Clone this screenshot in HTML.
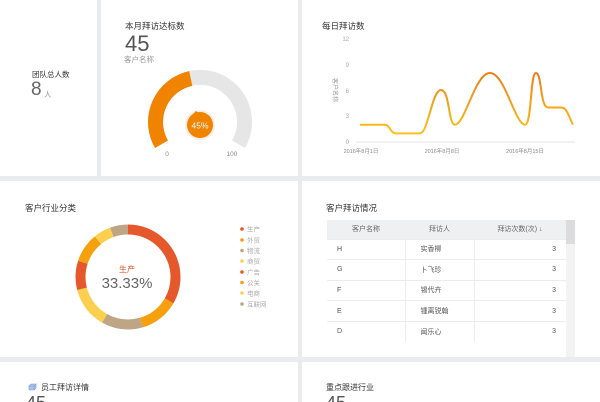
<!DOCTYPE html><html><head><meta charset="utf-8"><style>
*{margin:0;padding:0;box-sizing:border-box}
html,body{width:600px;height:402px;overflow:hidden}
body{background:#e9ebee;position:relative;font-family:"Liberation Sans","Noto Sans CJK SC",sans-serif;color:#333}
.p{position:absolute;background:#fff}
.t{position:absolute;font-size:8.5px;color:#333}
.s{position:absolute;color:#999}
table{position:absolute;left:327px;top:220px;width:239px;border-collapse:collapse;font-size:7px;color:#555}
td,th{height:20.6px;border-bottom:1px solid #ececec;font-weight:normal}
th{background:#eef0f2;height:19px;color:#666}
</style></head><body>
<div class="p" style="left:0;top:0;width:97px;height:176px"></div>
<div class="p" style="left:101px;top:0;width:197px;height:176px"></div>
<div class="p" style="left:302px;top:0;width:298px;height:176px"></div>
<div class="p" style="left:0;top:181px;width:298px;height:176px"></div>
<div class="p" style="left:302px;top:181px;width:298px;height:176px"></div>
<div class="p" style="left:0;top:362px;width:298px;height:60px"></div>
<div class="p" style="left:302px;top:362px;width:298px;height:60px"></div>

<div class="t" style="left:32px;top:69px;font-size:7.5px">团队总人数</div>
<div class="s" style="left:31px;top:79px;font-size:19px;color:#666">8</div>
<div class="s" style="left:44px;top:89px;font-size:7.5px">人</div>

<div class="t" style="left:125px;top:20px">本月拜访达标数</div>
<div class="s" style="left:125px;top:31px;font-size:22px;color:#555">45</div>
<div class="s" style="left:124px;top:54px;font-size:7.5px">客户名称</div>
<svg style="position:absolute;left:0;top:0" width="600" height="402">
<path d="M161.5,144.25 A44.5,44.5 0 1 1 238.5,144.25" fill="none" stroke="#e6e6e6" stroke-width="15"/>
<path d="M161.5,144.25 A44.5,44.5 0 0 1 190.75,78.5" fill="none" stroke="#f08300" stroke-width="15"/>
<circle cx="200" cy="125" r="15" fill="#f6eee4"/>
<circle cx="200" cy="125" r="13" fill="#f08300"/>
<path d="M191,116 L196,111 L199,113Z" fill="#f08300"/>
<text x="200" y="128.5" font-size="8.5" fill="#fff" text-anchor="middle" font-family="Liberation Sans">45%</text>
<text x="167" y="156" font-size="6.5" fill="#888" text-anchor="middle">0</text>
<text x="232" y="156" font-size="6.5" fill="#888" text-anchor="middle">100</text>

<g font-size="6" fill="#aaa" text-anchor="end" font-family="Liberation Sans">
<text x="349" y="41">12</text><text x="349" y="67">9</text><text x="349" y="93">6</text><text x="349" y="118">3</text><text x="349" y="144">0</text></g>
<line x1="356" y1="142" x2="575" y2="142" stroke="#ddd" stroke-width="0.7"/>
<text x="0" y="0" font-size="6" fill="#999" transform="translate(333,78) rotate(90)" font-family="Liberation Sans,Noto Sans CJK SC">客户名称</text>
<g font-size="5.5" fill="#888" text-anchor="middle" font-family="Liberation Sans,Noto Sans CJK SC">
<text x="361" y="153">2016年8月1日</text><text x="442" y="153">2016年8月8日</text><text x="525" y="153">2016年8月15日</text></g>
<defs><linearGradient id="g" x1="0" y1="73" x2="0" y2="134" gradientUnits="userSpaceOnUse"><stop offset="0" stop-color="#ec7e1a"/><stop offset="1" stop-color="#fbc21a"/></linearGradient></defs>
<path d="M360,124.7 L385,124.7 C390,124.7 390,133.4 396,133.4 L420,133.4 C428,133.4 432,90 441,90 C450,90 448,124.7 455,124.7 C465,124.7 475,73 490,73 C505,73 515,124.7 525,124.7 C532,124.7 530,73 536,73 C542,73 540,107.5 548,107.5 L561,107.5 C567,107.5 568,115 573,124.7" fill="none" stroke="url(#g)" stroke-width="2"/>

<g transform="rotate(-90 128 277)" fill="none" stroke-width="10">
<circle cx="128" cy="277" r="47.5" stroke="#e5582b" stroke-dasharray="99.5 300"/>
<circle cx="128" cy="277" r="47.5" stroke="#f5a00c" stroke-dasharray="0 99.5 36 300"/>
<circle cx="128" cy="277" r="47.5" stroke="#bda585" stroke-dasharray="0 135.5 38 300"/>
<circle cx="128" cy="277" r="47.5" stroke="#fcd04e" stroke-dasharray="0 173.5 38 300"/>
<circle cx="128" cy="277" r="47.5" stroke="#e5582b" stroke-dasharray="0 211.5 27 300"/>
<circle cx="128" cy="277" r="47.5" stroke="#f5a00c" stroke-dasharray="0 238.5 27 300"/>
<circle cx="128" cy="277" r="47.5" stroke="#fcd04e" stroke-dasharray="0 265.5 16 300"/>
<circle cx="128" cy="277" r="47.5" stroke="#bda585" stroke-dasharray="0 281.5 17 300"/>
</g>
<circle cx="128" cy="277" r="42" fill="#fff"/>
<text x="127" y="272" font-size="8" fill="#e5582b" text-anchor="middle" font-family="Liberation Sans,Noto Sans CJK SC">生产</text>
<text x="127" y="288" font-size="15" fill="#666" text-anchor="middle" font-family="Liberation Sans">33.33%</text>
<g font-size="6.5" fill="#aaa" font-family="Liberation Sans,Noto Sans CJK SC">
<circle cx="242" cy="229" r="1.8" fill="#e5582b"/><text x="247" y="231.5">生产</text>
<circle cx="242" cy="240" r="1.8" fill="#f5a00c"/><text x="247" y="242.5">外贸</text>
<circle cx="242" cy="250.5" r="1.8" fill="#bda585"/><text x="247" y="253">物流</text>
<circle cx="242" cy="261" r="1.8" fill="#fcd04e"/><text x="247" y="263.5">商贸</text>
<circle cx="242" cy="272" r="1.8" fill="#e5582b"/><text x="247" y="274.5">广告</text>
<circle cx="242" cy="282.5" r="1.8" fill="#f5a00c"/><text x="247" y="285">公关</text>
<circle cx="242" cy="293" r="1.8" fill="#fcd04e"/><text x="247" y="295.5">电商</text>
<circle cx="242" cy="304" r="1.8" fill="#bda585"/><text x="247" y="306.5">互联网</text>
</g>
<rect x="566" y="220" width="9" height="137" fill="#f3f3f3"/>
<rect x="566" y="220" width="9" height="24" fill="#dcdcdc"/>
<path d="M29,386 h5 l2,-2 h-5z M29,386 v4 h5 v-4 M34,386 l2,-2 v4 l-2,2" fill="#a9c4ea" stroke="#7aa0d8" stroke-width="0.6"/>
</svg>
<div class="t" style="left:322px;top:20px">每日拜访数</div>
<div class="t" style="left:25px;top:202px">客户行业分类</div>
<div class="t" style="left:326px;top:202px">客户拜访情况</div>
<table>
<tr><th style="width:78px">客户名称</th><th style="width:69px">拜访人</th><th>拜访次数(次) ↓</th></tr>
<tr><td style="padding-left:10px">H</td><td style="border-left:1px solid #ececec;padding-left:15px">实香柳</td><td style="border-left:1px solid #ececec;text-align:right;padding-right:10px">3</td></tr>
<tr><td style="padding-left:10px">G</td><td style="border-left:1px solid #ececec;padding-left:15px">卜飞珍</td><td style="border-left:1px solid #ececec;text-align:right;padding-right:10px">3</td></tr>
<tr><td style="padding-left:10px">F</td><td style="border-left:1px solid #ececec;padding-left:15px">锡代卉</td><td style="border-left:1px solid #ececec;text-align:right;padding-right:10px">3</td></tr>
<tr><td style="padding-left:10px">E</td><td style="border-left:1px solid #ececec;padding-left:15px">锺离锐翰</td><td style="border-left:1px solid #ececec;text-align:right;padding-right:10px">3</td></tr>
<tr><td style="padding-left:10px;border:none">D</td><td style="border-left:1px solid #ececec;padding-left:15px;border-bottom:none">闻乐心</td><td style="border-left:1px solid #ececec;text-align:right;padding-right:10px;border-bottom:none">3</td></tr>
</table>
<div class="t" style="left:41px;top:382px;font-size:8px">员工拜访详情</div>
<div class="s" style="left:26px;top:393px;font-size:18px;color:#555">45</div>
<div class="t" style="left:326px;top:382px;font-size:8px">重点跟进行业</div>
<div class="s" style="left:326px;top:393px;font-size:18px;color:#555">45</div>
</body></html>
